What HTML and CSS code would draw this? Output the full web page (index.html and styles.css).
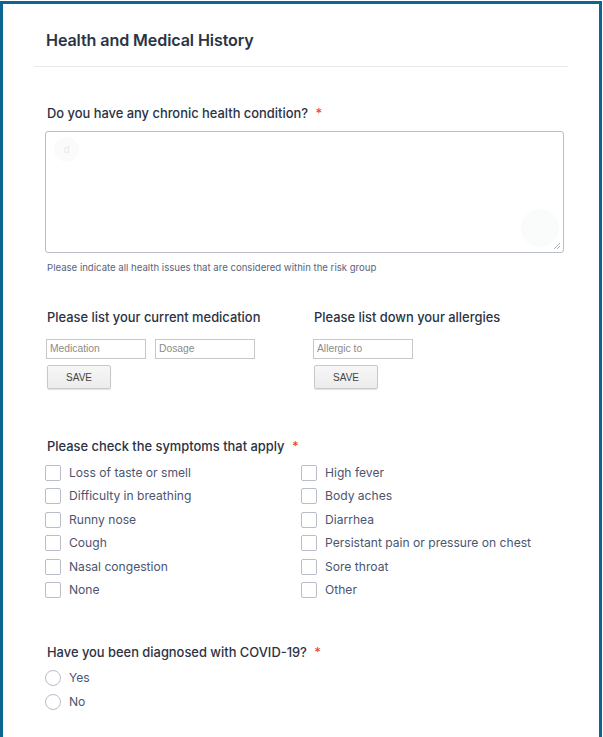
FILE: index.html
```html
<!DOCTYPE html>
<html>
<head>
<meta charset="utf-8">
<link rel="stylesheet" href="styles.css">
</head>
<body>
<div class="frame">
  <div class="header">
    <h1 class="title">Health and Medical History</h1>
  </div>
  <div class="divider"></div>

  <div class="q q-chronic">
    <div class="label">Do you have any chronic health condition? <span class="req">*</span></div>
    <div class="textarea">
      <span class="ghost-dot">d</span>
      <span class="ghost-dot2"></span>
      <svg class="grip" width="6" height="6" viewBox="0 0 6 6"><path d="M6 0L0 6M6 3L3 6" stroke="#b0b4bc" stroke-width="1"/></svg>
    </div>
    <div class="help">Please indicate all health issues that are considered within the risk group</div>
  </div>

  <div class="q lists">
    <div class="list-col">
      <div class="label strong">Please list your current medication</div>
      <div class="inputs">
        <div class="field">Medication</div>
        <div class="field">Dosage</div>
      </div>
      <div class="btn">SAVE</div>
    </div>
    <div class="list-col">
      <div class="label strong">Please list down your allergies</div>
      <div class="inputs">
        <div class="field">Allergic to</div>
      </div>
      <div class="btn">SAVE</div>
    </div>
  </div>

  <div class="q symptoms">
    <div class="label">Please check the symptoms that apply <span class="req">*</span></div>
    <div class="checks">
      <div class="check"><span class="box"></span>Loss of taste or smell</div>
      <div class="check"><span class="box"></span>High fever</div>
      <div class="check"><span class="box"></span>Difficulty in breathing</div>
      <div class="check"><span class="box"></span>Body aches</div>
      <div class="check"><span class="box"></span>Runny nose</div>
      <div class="check"><span class="box"></span>Diarrhea</div>
      <div class="check"><span class="box"></span>Cough</div>
      <div class="check"><span class="box"></span>Persistant pain or pressure on chest</div>
      <div class="check"><span class="box"></span>Nasal congestion</div>
      <div class="check"><span class="box"></span>Sore throat</div>
      <div class="check"><span class="box"></span>None</div>
      <div class="check"><span class="box"></span>Other</div>
    </div>
  </div>

  <div class="q covid">
    <div class="label">Have you been diagnosed with COVID-19? <span class="req">*</span></div>
    <div class="radios">
      <div class="check"><span class="circle"></span>Yes</div>
      <div class="check"><span class="circle"></span>No</div>
    </div>
  </div>
</div>
</body>
</html>
```
FILE: styles.css
```css
* { box-sizing: border-box; }
html, body { margin: 0; padding: 0; background: #fff; }
body {
  font-family: Inter, "Noto Sans", sans-serif;
  color: #2c3345;
  padding-top: 1px;
}
.frame {
  width: 602px;
  height: 740px;
  border: 3px solid #0b6690;
  border-bottom: none;
  background: #fff;
  padding: 0 0 0 31px;
}
.header { padding: 26px 0 0 12px; height: 62px; }
.title {
  margin: 0;
  font-size: 16.1px;
  font-weight: 600;
  color: #2c3345;
  letter-spacing: -0.1px;
  line-height: 20px;
}
.divider { width: 534px; height: 1px; background: #e8e9ee; }

.q { padding-left: 13px; }
.label {
  font-size: 12.9px;
  font-weight: 500;
  color: #2c3345;
  line-height: 16px;
}
.req { color: #f23a3c; margin-left: 4px; }

.q-chronic { padding-top: 39px; }
.q-chronic .textarea {
  position: relative;
  margin-top: 9px;
  width: 519px;
  height: 122px;
  border: 1px solid #b8bdc9;
  border-radius: 3px;
  margin-left: -2px;
}
.ghost-dot {
  position: absolute; left: 8px; top: 5px; width: 25px; height: 25px;
  border-radius: 50%; background: #fbfbfc;
  font-size: 10px; color: #e9eaee; line-height: 25px; text-align: center;
}
.ghost-dot2 {
  position: absolute; right: 4px; bottom: 5px; width: 38px; height: 38px;
  border-radius: 50%; background: #fafbfb;
}
.grip { position: absolute; right: 3px; bottom: 3px; }
.help {
  margin-top: 9px;
  font-size: 9.6px;
  color: #57647e;
  line-height: 12px;
}

.lists {
  display: flex;
  padding-top: 36px;
}
.list-col { width: 267px; }
.label.strong { font-weight: 500; }
.inputs { display: flex; gap: 9px; margin-top: 13px; margin-left: -1px; }
.field {
  width: 100px;
  height: 20px;
  border: 1px solid #c8c8c8;
  font-family: "Liberation Sans", Arial, sans-serif;
  font-size: 10.3px;
  color: #8b8b8b;
  padding: 3px 3px;
  line-height: 12px;
}
.btn {
  margin-top: 6px;
  width: 64px;
  height: 24px;
  border: 1px solid #c9c9c9;
  border-radius: 2px;
  background: linear-gradient(#f7f7f7, #ececec);
  box-shadow: 0 1px 1px rgba(0,0,0,0.12);
  font-family: "Liberation Sans", Arial, sans-serif;
  font-size: 10px;
  color: #444;
  display: flex; align-items: center; justify-content: center;
}

.symptoms { padding-top: 50px; }
.checks {
  display: grid;
  grid-template-columns: 256px 260px;
  row-gap: 7.4px;
  margin-top: 10px;
  margin-left: -2px;
}
.check {
  display: flex;
  align-items: center;
  font-size: 12.1px;
  color: #4c5570;
  line-height: 16px;
}
.box {
  width: 16px; height: 16px;
  border: 1px solid #b8bdc9;
  border-radius: 2px;
  margin-right: 8px;
  flex: none;
}
.covid { padding-top: 47px; }
.radios { display: flex; flex-direction: column; gap: 8px; margin-top: 9px; margin-left: -2px; }
.circle {
  width: 16px; height: 16px;
  border: 1px solid #b8bdc9;
  border-radius: 50%;
  margin-right: 8px;
  flex: none;
}
```
